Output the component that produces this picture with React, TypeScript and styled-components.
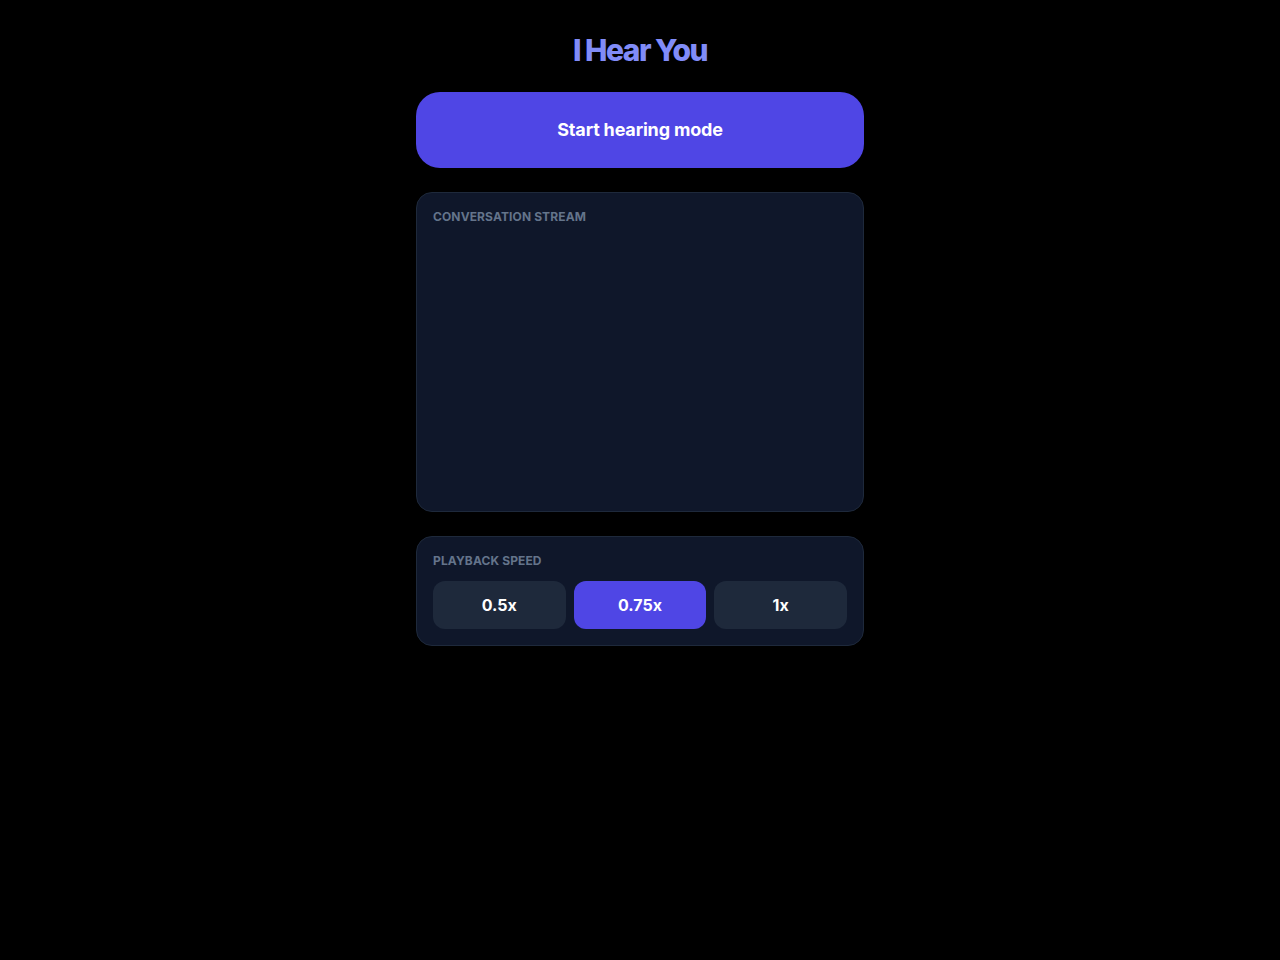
import React, { useState } from 'react'
import styled, { createGlobalStyle } from 'styled-components'

const GlobalStyle = createGlobalStyle`
  html, body {
    margin: 0;
    padding: 0;
    background: #000000;
    font-family: Inter, "Noto Sans", sans-serif;
    color: #ffffff;
  }
  * {
    box-sizing: border-box;
  }
`

const Page = styled.div`
  min-height: 960px;
  display: flex;
  justify-content: center;
  padding: 32px 16px;
`

const Column = styled.main`
  width: 100%;
  max-width: 448px;
  display: flex;
  flex-direction: column;
  gap: 24px;
`

const Title = styled.h1`
  margin: 0;
  text-align: center;
  font-size: 30px;
  line-height: 36px;
  font-weight: 800;
  letter-spacing: -0.05em;
  color: #818cf8;
`

const HearButton = styled.button`
  width: 100%;
  padding: 24px;
  border: none;
  border-radius: 24px;
  background: #4f46e5;
  color: #ffffff;
  font-family: inherit;
  font-size: 18px;
  line-height: 28px;
  font-weight: 700;
  letter-spacing: -0.01em;
  cursor: pointer;
`

const Panel = styled.section<{ $height?: number }>`
  background: #0f172a;
  border: 1px solid #1e293b;
  border-radius: 16px;
  padding: 16px;
  height: ${({ $height }) => ($height ? `${$height}px` : 'auto')};
`

const Label = styled.div`
  font-size: 12px;
  line-height: 16px;
  font-weight: 700;
  text-transform: uppercase;
  letter-spacing: 0.01em;
  color: #64748b;
`

const SpeedRow = styled.div`
  display: grid;
  grid-template-columns: repeat(3, 1fr);
  gap: 8px;
  margin-top: 12px;
`

const SpeedButton = styled.button<{ $active?: boolean }>`
  padding: 12px;
  border: none;
  border-radius: 12px;
  background: ${({ $active }) => ($active ? '#4f46e5' : '#1e293b')};
  color: #ffffff;
  font-family: inherit;
  font-size: 16px;
  line-height: 24px;
  font-weight: 700;
  cursor: pointer;
`

const speeds = ['0.5x', '0.75x', '1x']

const App: React.FC = () => {
  const [speed, setSpeed] = useState('0.75x')

  return (
    <>
      <GlobalStyle />
      <Page>
        <Column>
          <Title>I Hear You</Title>
          <HearButton>Start hearing mode</HearButton>
          <Panel $height={320}>
            <Label>Conversation stream</Label>
          </Panel>
          <Panel>
            <Label>Playback speed</Label>
            <SpeedRow>
              {speeds.map((s) => (
                <SpeedButton key={s} $active={s === speed} onClick={() => setSpeed(s)}>
                  {s}
                </SpeedButton>
              ))}
            </SpeedRow>
          </Panel>
        </Column>
      </Page>
    </>
  )
}

export default App
